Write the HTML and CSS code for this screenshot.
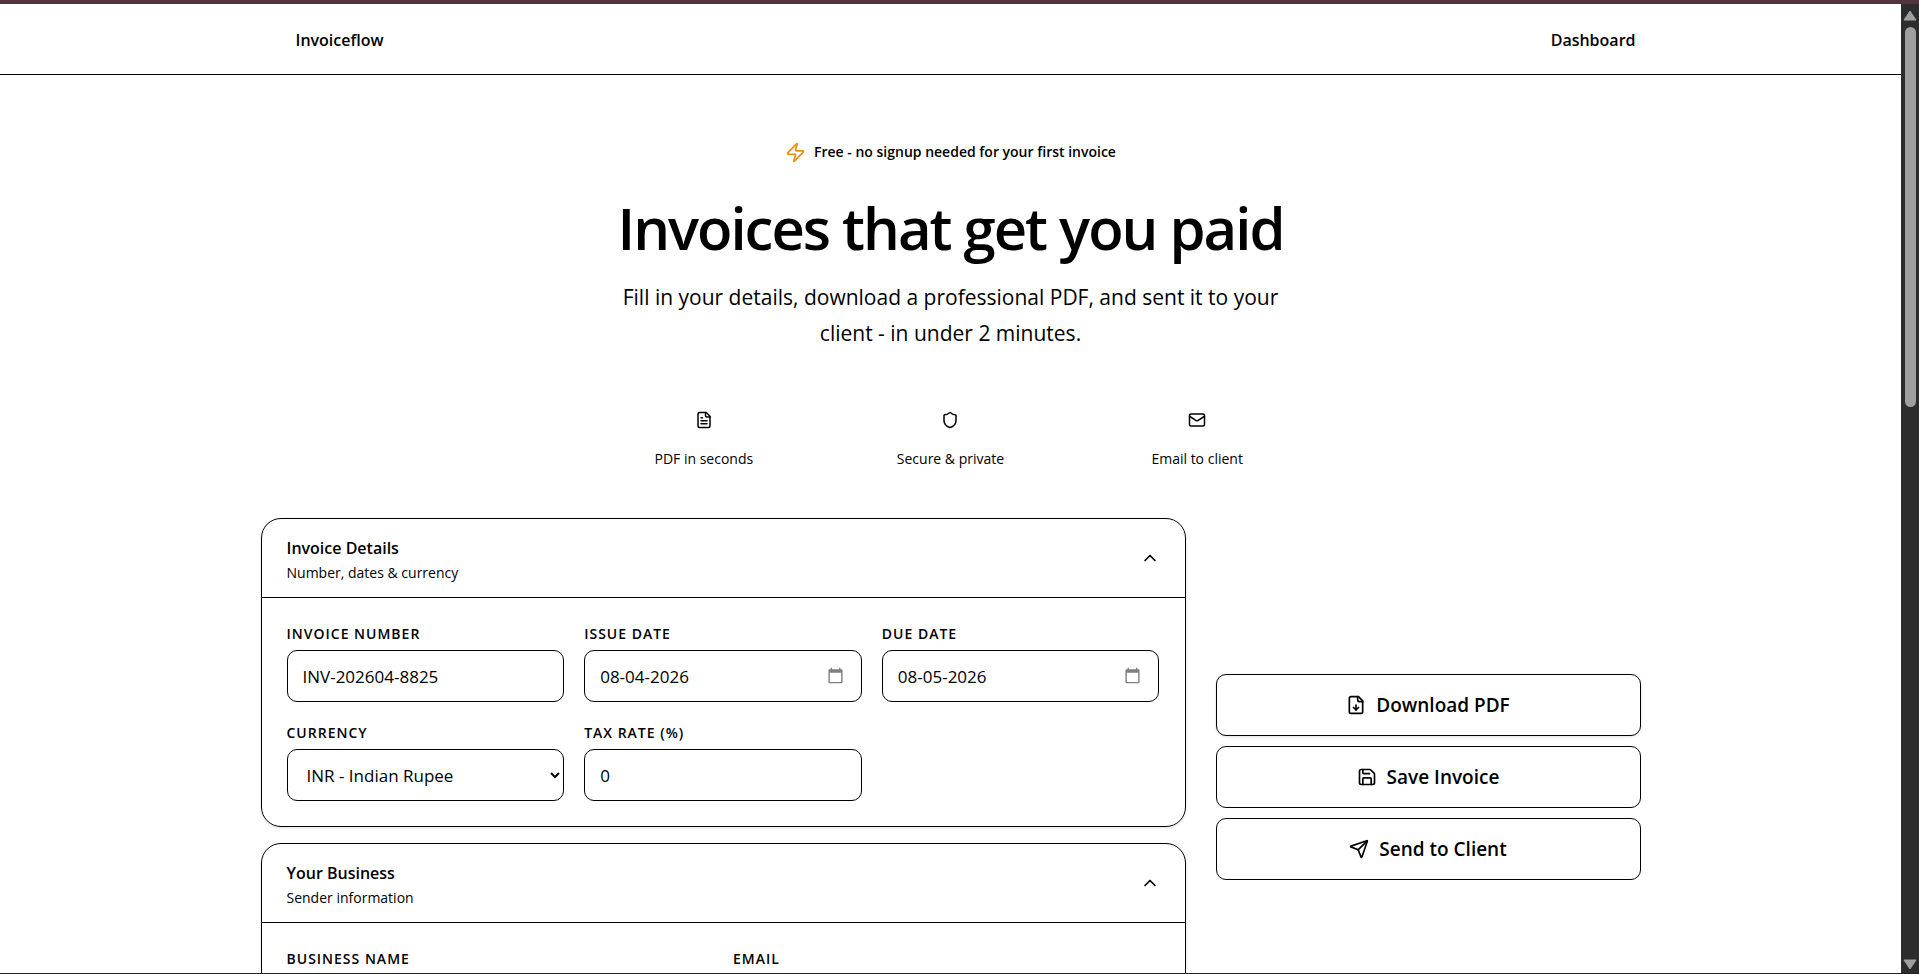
FILE: index.html
```html
<!DOCTYPE html>
<html lang="en">
    <head>
        <meta charset="UTF-8" />
        <meta name="viewport" content="width=device-width, initial-scale=1.0" />
        <title>Invoiceflow</title>
        <link rel="stylesheet" href="styles.css">
    </head>
    <body>
        <div class="viewport">
            <div class="page">
                <header class="navbar">
                    <nav class="container navbar-inner">
                        <a href="#" class="nav-link">Invoiceflow</a>
                        <a href="#" class="nav-link">Dashboard</a>
                    </nav>
                </header>

                <main>
                    <!-- Hero -->
                    <section class="hero">
                        <p class="badge">
                            <svg class="icon icon-bolt" viewBox="0 0 24 24"><path d="M4 14a1 1 0 0 1-.78-1.63l9.9-10.2a.5.5 0 0 1 .86.46l-1.92 6.02A1 1 0 0 0 13 10h7a1 1 0 0 1 .78 1.63l-9.9 10.2a.5.5 0 0 1-.86-.46l1.92-6.02A1 1 0 0 0 11 14z"/></svg>
                            Free - no signup needed for your first invoice
                        </p>
                        <h1>Invoices that get you paid</h1>
                        <p class="lead">Fill in your details, download a professional PDF, and sent it to your client - in under 2 minutes.</p>
                        <ul class="features">
                            <li>
                                <svg class="icon" viewBox="0 0 24 24"><path d="M15 2H6a2 2 0 0 0-2 2v16a2 2 0 0 0 2 2h12a2 2 0 0 0 2-2V7Z"/><path d="M14 2v4a2 2 0 0 0 2 2h4"/><path d="M10 9H8"/><path d="M16 13H8"/><path d="M16 17H8"/></svg>
                                PDF in seconds
                            </li>
                            <li>
                                <svg class="icon" viewBox="0 0 24 24"><path d="M20 13c0 5-3.5 7.5-7.66 8.95a1 1 0 0 1-.67-.01C7.5 20.5 4 18 4 13V6a1 1 0 0 1 1-1c2 0 4.5-1.2 6.24-2.72a1.17 1.17 0 0 1 1.52 0C14.51 3.81 17 5 19 5a1 1 0 0 1 1 1z"/></svg>
                                Secure &amp; private
                            </li>
                            <li>
                                <svg class="icon" viewBox="0 0 24 24"><rect x="2" y="4" width="20" height="16" rx="2"/><path d="m22 7-8.97 5.7a1.94 1.94 0 0 1-2.06 0L2 7"/></svg>
                                Email to client
                            </li>
                        </ul>
                    </section>

                    <div class="container workspace">
                        <form class="sections">
                            <section class="card">
                                <div class="card-header">
                                    <div>
                                        <h2>Invoice Details</h2>
                                        <p>Number, dates &amp; currency</p>
                                    </div>
                                    <button type="button" class="collapse" aria-label="Collapse invoice details">
                                        <svg class="icon" viewBox="0 0 24 24"><path d="m18 15-6-6-6 6"/></svg>
                                    </button>
                                </div>
                                <div class="card-body three-cols">
                                    <div class="field">
                                        <label for="invoiceNumber">Invoice Number</label>
                                        <input type="text" id="invoiceNumber" value="INV-202604-8825" />
                                    </div>
                                    <div class="field">
                                        <label for="issueDate">Issue Date</label>
                                        <div class="date-box">
                                            <input type="text" id="issueDate" value="08-04-2026" />
                                            <button type="button" class="picker" aria-label="Pick issue date">
                                                <svg viewBox="0 0 24 24"><path d="M20 3h-1V1h-2v2H7V1H5v2H4c-1.1 0-2 .9-2 2v16c0 1.1.9 2 2 2h16c1.1 0 2-.9 2-2V5c0-1.1-.9-2-2-2zm0 18H4V8h16v13z"/></svg>
                                            </button>
                                        </div>
                                    </div>
                                    <div class="field">
                                        <label for="dueDate">Due Date</label>
                                        <div class="date-box">
                                            <input type="text" id="dueDate" value="08-05-2026" />
                                            <button type="button" class="picker" aria-label="Pick due date">
                                                <svg viewBox="0 0 24 24"><path d="M20 3h-1V1h-2v2H7V1H5v2H4c-1.1 0-2 .9-2 2v16c0 1.1.9 2 2 2h16c1.1 0 2-.9 2-2V5c0-1.1-.9-2-2-2zm0 18H4V8h16v13z"/></svg>
                                            </button>
                                        </div>
                                    </div>
                                    <div class="field">
                                        <label for="currency">Currency</label>
                                        <select id="currency">
                                            <option>INR - Indian Rupee</option>
                                        </select>
                                    </div>
                                    <div class="field">
                                        <label for="taxRate">Tax Rate (%)</label>
                                        <input type="text" inputmode="decimal" id="taxRate" value="0" />
                                    </div>
                                </div>
                            </section>

                            <section class="card">
                                <div class="card-header">
                                    <div>
                                        <h2>Your Business</h2>
                                        <p>Sender information</p>
                                    </div>
                                    <button type="button" class="collapse" aria-label="Collapse your business">
                                        <svg class="icon" viewBox="0 0 24 24"><path d="m18 15-6-6-6 6"/></svg>
                                    </button>
                                </div>
                                <div class="card-body two-cols">
                                    <div class="field">
                                        <label for="businessName">Business Name</label>
                                        <input type="text" id="businessName" />
                                    </div>
                                    <div class="field">
                                        <label for="email">Email</label>
                                        <input type="email" id="email" />
                                    </div>
                                </div>
                            </section>
                        </form>

                        <aside class="actions">
                            <button type="button" class="action">
                                <svg class="icon" viewBox="0 0 24 24"><path d="M15 2H6a2 2 0 0 0-2 2v16a2 2 0 0 0 2 2h12a2 2 0 0 0 2-2V7Z"/><path d="M14 2v4a2 2 0 0 0 2 2h4"/><path d="M12 18v-6"/><path d="m9 15 3 3 3-3"/></svg>
                                Download PDF
                            </button>
                            <button type="button" class="action">
                                <svg class="icon" viewBox="0 0 24 24"><path d="M15.2 3a2 2 0 0 1 1.4.6l3.8 3.8a2 2 0 0 1 .6 1.4V19a2 2 0 0 1-2 2H5a2 2 0 0 1-2-2V5a2 2 0 0 1 2-2z"/><path d="M17 21v-7a1 1 0 0 0-1-1H8a1 1 0 0 0-1 1v7"/><path d="M7 3v4a1 1 0 0 0 1 1h7"/></svg>
                                Save Invoice
                            </button>
                            <button type="button" class="action">
                                <svg class="icon" viewBox="0 0 24 24"><path d="M14.536 21.686a.5.5 0 0 0 .937-.024l6.5-19a.496.496 0 0 0-.635-.635l-19 6.5a.5.5 0 0 0-.024.937l7.93 3.18a2 2 0 0 1 1.112 1.11z"/><path d="m21.854 2.147-10.94 10.939"/></svg>
                                Send to Client
                            </button>
                        </aside>
                    </div>
                </main>
            </div>

            <div class="scrollbar" aria-hidden="true">
                <svg class="arrow" viewBox="0 0 14 11"><path d="M7 1 13 10H1z"/></svg>
                <div class="track"><div class="thumb"></div></div>
                <svg class="arrow" viewBox="0 0 14 11"><path d="M7 10 1 1h12z"/></svg>
            </div>
        </div>
    </body>
</html>
```
FILE: styles.css
```css
* {
    box-sizing: border-box;
}

body {
    font-family: "Segoe UI", "Open Sans", "Noto Sans", sans-serif;
    margin: 0;
    height: 100vh;
    border-top: 4px solid #50353b;
    border-bottom: 1px solid #222;
    background-color: #fff;
    color: #000;
    overflow: hidden;
}

h1,
h2,
p,
ul {
    margin: 0;
    padding: 0;
}

button,
input,
select {
    font-family: inherit;
    color: inherit;
}

button {
    cursor: pointer;
}

.viewport {
    display: flex;
    height: 100%;
}

.page {
    flex: 1;
    overflow: hidden;
}

.container {
    max-width: 1380px;
    margin: 0 auto;
}

.icon {
    width: 18px;
    height: 18px;
    fill: none;
    stroke: currentColor;
    stroke-width: 2;
    stroke-linecap: round;
    stroke-linejoin: round;
}

/* Navbar */
.navbar {
    border-bottom: 1px solid #000;
}

.navbar-inner {
    display: flex;
    justify-content: space-between;
    align-items: center;
    height: 70px;
    padding: 2px 5px 0 35px;
}

.nav-link {
    font-size: 16px;
    font-weight: 600;
    line-height: 24px;
    color: #000;
    text-decoration: none;
}

/* Hero */
.hero {
    display: flex;
    flex-direction: column;
    align-items: center;
    padding-top: 65px;
    text-align: center;
}

.badge {
    display: flex;
    align-items: center;
    gap: 8px;
    font-size: 14px;
    font-weight: 600;
    line-height: 24px;
}

.icon-bolt {
    width: 21px;
    height: 21px;
    color: #e8911c;
}

.hero h1 {
    margin-top: 22px;
    font-size: 58px;
    font-weight: 600;
    line-height: 84px;
    letter-spacing: -2px;
}

.lead {
    max-width: 700px;
    margin-top: 9px;
    font-size: 21px;
    line-height: 36px;
}

.features {
    display: grid;
    grid-template-columns: repeat(3, 1fr);
    width: 740px;
    max-width: 100%;
    margin-top: 60px;
    list-style: none;
    font-size: 14px;
    line-height: 20px;
}

.features li {
    display: flex;
    flex-direction: column;
    align-items: center;
    gap: 20px;
}

/* Form and action buttons */
.workspace {
    display: grid;
    grid-template-columns: 37fr 17fr;
    gap: 30px;
    margin-top: 49px;
}

.sections {
    display: flex;
    flex-direction: column;
    gap: 16px;
}

.card {
    border: 1px solid #000;
    border-radius: 20px;
    box-shadow: 0 1px 3px rgba(0, 0, 0, 0.12);
}

.card-header {
    display: flex;
    justify-content: space-between;
    align-items: center;
    padding: 14px 25px;
    border-bottom: 1px solid #000;
}

.card-header h2 {
    font-size: 16px;
    font-weight: 600;
    line-height: 30px;
}

.card-header p {
    font-size: 14px;
    line-height: 20px;
}

.collapse {
    display: flex;
    padding: 0;
    border: none;
    background: none;
}

.collapse .icon,
.action .icon {
    width: 20px;
    height: 20px;
}

.card-body {
    display: grid;
    gap: 20px;
    padding: 25px;
}

.three-cols {
    grid-template-columns: repeat(3, 1fr);
}

.two-cols {
    grid-template-columns: repeat(2, 1fr);
}

.field {
    display: flex;
    flex-direction: column;
    gap: 6px;
}

.field label {
    font-size: 14px;
    font-weight: 600;
    line-height: 21px;
    letter-spacing: 1px;
    text-transform: uppercase;
}

.field input,
.field select {
    width: 100%;
    height: 52px;
    padding: 0 15px;
    border: 1px solid #000;
    border-radius: 10px;
    background-color: #fff;
    font-size: 17px;
}

.date-box {
    position: relative;
}

.picker {
    position: absolute;
    top: 17px;
    right: 18px;
    display: flex;
    padding: 0;
    border: none;
    background: none;
}

.picker svg {
    width: 17px;
    height: 17px;
    fill: #808080;
}

.actions {
    display: flex;
    flex-direction: column;
    gap: 10px;
    padding-top: 156px;
}

.action {
    display: flex;
    justify-content: center;
    align-items: center;
    gap: 10px;
    height: 62px;
    border: 1px solid #000;
    border-radius: 10px;
    background-color: #fff;
    font-size: 19px;
    font-weight: 600;
}

.action:first-child {
    box-shadow: 0 1px 3px rgba(0, 0, 0, 0.12);
}

/* Scrollbar */
.scrollbar {
    display: flex;
    flex-direction: column;
    align-items: center;
    gap: 6px;
    width: 18px;
    padding: 6px 0 3px;
    background-color: #2c2c2c;
}

.arrow {
    width: 14px;
    height: 11px;
    fill: #9f9f9f;
    stroke: #9f9f9f;
    stroke-linejoin: round;
}

.track {
    flex: 1;
}

.thumb {
    width: 11px;
    height: 41%;
    border-radius: 6px;
    background-color: #9f9f9f;
}
```
